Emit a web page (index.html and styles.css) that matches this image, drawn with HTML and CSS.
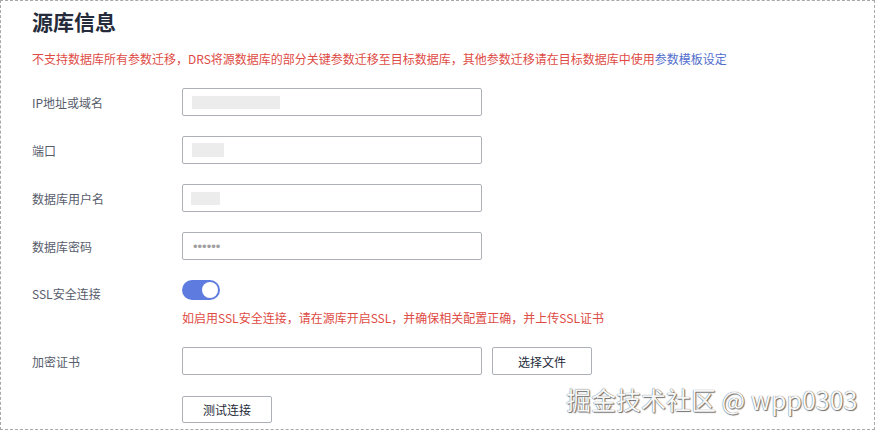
FILE: index.html
```html
<!DOCTYPE html>
<html lang="zh-CN">
<head>
<meta charset="utf-8">
<title>源库信息</title>
<link rel="stylesheet" href="styles.css">
</head>
<body>
<div class="panel">
  <h2 class="title">源库信息</h2>
  <p class="notice">不支持数据库所有参数迁移，DRS将源数据库的部分关键参数迁移至目标数据库，其他参数迁移请在目标数据库中使用<a class="link">参数模板设定</a></p>
  <div class="form">
    <div class="row">
      <label class="label">IP地址或域名</label>
      <div class="input"><span class="blur blur-ip"></span></div>
    </div>
    <div class="row">
      <label class="label">端口</label>
      <div class="input"><span class="blur blur-port"></span></div>
    </div>
    <div class="row">
      <label class="label">数据库用户名</label>
      <div class="input"><span class="blur blur-user"></span></div>
    </div>
    <div class="row">
      <label class="label">数据库密码</label>
      <div class="input"><span class="dots">••••••</span></div>
    </div>
    <div class="row row-switch">
      <label class="label">SSL安全连接</label>
      <div class="switch"><span class="knob"></span></div>
    </div>
    <div class="hint">如启用SSL安全连接，请在源库开启SSL，并确保相关配置正确，并上传SSL证书</div>
    <div class="row row-cert">
      <label class="label">加密证书</label>
      <div class="field-group">
        <div class="input"></div>
        <button class="btn btn-file">选择文件</button>
      </div>
    </div>
    <div class="row">
      <span class="label"></span>
      <div><button class="btn btn-test">测试连接</button></div>
    </div>
  </div>
  <div class="watermark">掘金技术社区 @ wpp0303</div>
</div>
</body>
</html>
```
FILE: styles.css
```css
* { box-sizing: border-box; }
html, body { margin: 0; padding: 0; background: #fff; }
body {
  font-family: "Noto Sans CJK SC", "Noto Sans", "Liberation Sans", sans-serif;
  color: #252b3a;
}
.panel {
  position: relative;
  width: 875px;
  height: 430px;
  border: 1px dashed #a8a8a8;
  padding: 0 0 0 31px;
  overflow: hidden;
}
.title {
  margin: 0;
  padding-top: 5px;
  font-size: 21px;
  line-height: 30px;
  font-weight: 700;
  color: #252b3a;
}
.notice {
  margin: 14px 0 0;
  font-size: 12px;
  line-height: 18px;
  color: #de4b45;
}
.link { color: #526ecc; text-decoration: none; }
.form { margin-top: 20px; }
.row {
  display: grid;
  grid-template-columns: 150px auto;
  align-items: center;
  height: 28px;
  margin-bottom: 20px;
}
.label {
  font-size: 12px;
  color: #575d6c;
}
.input {
  width: 300px;
  height: 28px;
  border: 1px solid #adb0b8;
  border-radius: 2px;
  display: flex;
  align-items: center;
  padding-left: 9px;
}
.blur {
  display: block;
  background: #ececec;
  border-radius: 1px;
}
.blur-ip { width: 88px; height: 13px; }
.blur-port { width: 32px; height: 14px; }
.blur-user { width: 29px; height: 13px; margin-left: -1px; }
.dots {
  font-family: "Liberation Sans", sans-serif;
  font-size: 13px;
  letter-spacing: 0;
  color: #a0a0a0;
  margin-left: 1px;
}
.row-switch { align-items: start; margin-bottom: 2px; }
.row-switch .label { line-height: 28px; }
.switch {
  width: 38px;
  height: 20px;
  border-radius: 10px;
  background: #5e7ce0;
  position: relative;
}
.knob {
  position: absolute;
  right: 2px;
  top: 2px;
  width: 16px;
  height: 16px;
  border-radius: 50%;
  background: #fff;
}
.hint {
  padding-left: 150px;
  font-size: 12px;
  line-height: 16px;
  color: #de4b45;
  margin-bottom: 21px;
}
.field-group { display: flex; gap: 10px; }
.btn {
  font-family: inherit;
  font-size: 12px;
  color: #252b3a;
  background: #fff;
  border: 1px solid #adb0b8;
  border-radius: 2px;
  height: 28px;
  padding: 0;
}
.btn-file { width: 100px; }
.btn-test { width: 90px; height: 27px; }
.watermark {
  position: absolute;
  left: 565px;
  top: 382px;
  font-size: 25px;
  line-height: 32px;
  color: #f7f7f7;
  text-shadow: 0 0 1px #444, 1px 1px 1px #777;
  white-space: nowrap;
}
```
